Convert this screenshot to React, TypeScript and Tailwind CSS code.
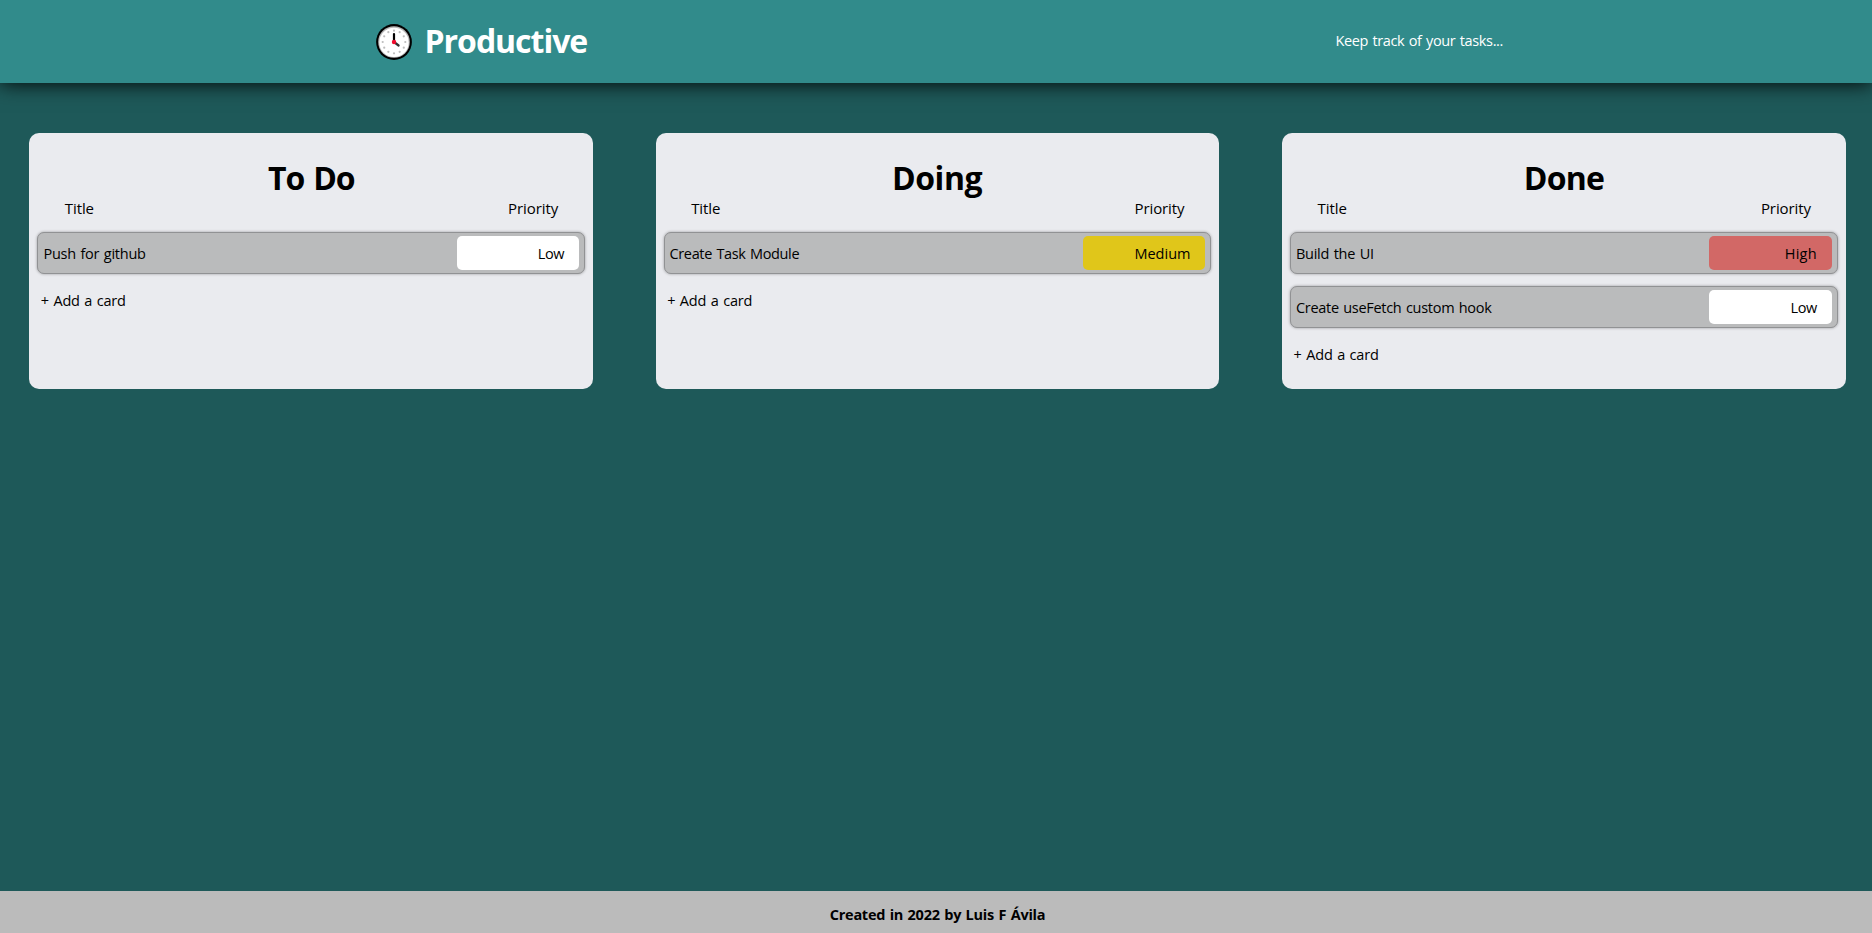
type Priority = 'Low' | 'Medium' | 'High';

interface Task {
  title: string;
  titleClass: string;
  priority: Priority;
}

interface ColumnData {
  name: string;
  nameClass: string;
  tasks: Task[];
}

const columns: ColumnData[] = [
  {
    name: 'To Do',
    nameClass: 'tracking-[-1.2px] [word-spacing:2px]',
    tasks: [{ title: 'Push for github', titleClass: 'pl-[0.4px] tracking-[-0.24px]', priority: 'Low' }],
  },
  {
    name: 'Doing',
    nameClass: 'pr-px tracking-[-0.4px]',
    tasks: [{ title: 'Create Task Module', titleClass: 'tracking-[-0.35px]', priority: 'Medium' }],
  },
  {
    name: 'Done',
    nameClass: 'tracking-[-0.7px]',
    tasks: [
      { title: 'Build the UI', titleClass: 'tracking-[-0.24px]', priority: 'High' },
      { title: 'Create useFetch custom hook', titleClass: 'tracking-[-0.29px]', priority: 'Low' },
    ],
  },
];

const priorityClass: Record<Priority, string> = {
  Low: 'bg-white tracking-[-0.4px]',
  Medium: 'bg-[#e0c61a]',
  High: 'bg-[#d26866] tracking-[0.25px]',
};

const ticks = Array.from({ length: 12 }, (_, i) => (i * Math.PI) / 6);

function ClockIcon() {
  return (
    <svg viewBox="0 0 36 36" className="size-9 shrink-0" aria-hidden="true">
      <circle cx="18" cy="18" r="17.9" fill="#000" />
      <circle cx="18" cy="18" r="15.8" fill="#b9b9b9" />
      <circle cx="18" cy="18.4" r="14.7" fill="#fff" />
      {ticks.map((a) => (
        <circle key={a} cx={18 + 11.3 * Math.sin(a)} cy={18 - 11.3 * Math.cos(a)} r="1.1" fill="#bdbdbd" />
      ))}
      <path d="M18 18V10" stroke="#000" strokeWidth="2.2" strokeLinecap="round" />
      <path d="M18 18l4.6 3.5" stroke="#333" strokeWidth="2.2" strokeLinecap="round" />
      <circle cx="18" cy="18" r="2.2" fill="#f00a2c" />
    </svg>
  );
}

function TaskRow({ task }: { task: Task }) {
  return (
    <li className="flex h-[42px] items-center justify-between rounded-[7px] border border-[#919294] bg-[#babbbc] pr-[5px] pl-[4.8px] leading-5 shadow-[0_0_3px_rgba(0,0,0,0.35)]">
      <span className={`pt-0.5 ${task.titleClass}`}>{task.title}</span>
      <span
        className={`flex h-[34px] w-[122.4px] items-center justify-end rounded-[5px] pt-0.5 pr-[15px] ${priorityClass[task.priority]}`}
      >
        {task.priority}
      </span>
    </li>
  );
}

function Column({ column }: { column: ColumnData }) {
  return (
    <section className="flex min-h-64 flex-1 flex-col rounded-[10px] bg-[#eaebef] px-2 pt-[23px] text-[14.5px] [word-spacing:1px]">
      <h2 className={`text-center text-[32px] leading-[43px] font-bold ${column.nameClass}`}>{column.name}</h2>
      <div className="flex h-[33px] justify-between pr-[27px] pl-[27.5px] text-[15px] leading-[18px] tracking-[-0.1px]">
        <span>Title</span>
        <span>Priority</span>
      </div>
      <ul className="flex flex-col gap-3">
        {column.tasks.map((task) => (
          <TaskRow key={task.title} task={task} />
        ))}
      </ul>
      <button type="button" className="mt-[17px] self-start pl-[3.5px] leading-5 tracking-[-0.2px] [word-spacing:1px]">
        + Add a card
      </button>
    </section>
  );
}

export default function App() {
  return (
    <div className="flex min-h-screen flex-col bg-[#1e5959] font-['Open_Sans','Noto_Sans',sans-serif] text-black">
      <header className="flex h-[83px] items-center justify-between bg-[#318b8b] pr-[369px] pl-[376px] text-white shadow-[0_0_20px_#000]">
        <div className="flex items-center gap-[12.5px]">
          <ClockIcon />
          <h1 className="pb-0.5 text-[32px] leading-[44px] font-bold tracking-[-1.02px]">Productive</h1>
        </div>
        <p className="pb-px text-[14.5px] leading-5 tracking-[-0.36px] [word-spacing:1px]">
          Keep track of your tasks...
        </p>
      </header>
      <main className="flex flex-1 items-start gap-[62.65px] pt-[50px] pr-[26.15px] pl-[29.3px]">
        {columns.map((column) => (
          <Column key={column.name} column={column} />
        ))}
      </main>
      <footer className="flex h-[42px] items-center justify-center bg-[#bbbbbb] pt-1.5 pl-[3px] text-[14.5px] leading-5 font-bold tracking-[-0.26px] [word-spacing:1px]">
        Created in 2022 by Luis F Ávila
      </footer>
    </div>
  );
}
